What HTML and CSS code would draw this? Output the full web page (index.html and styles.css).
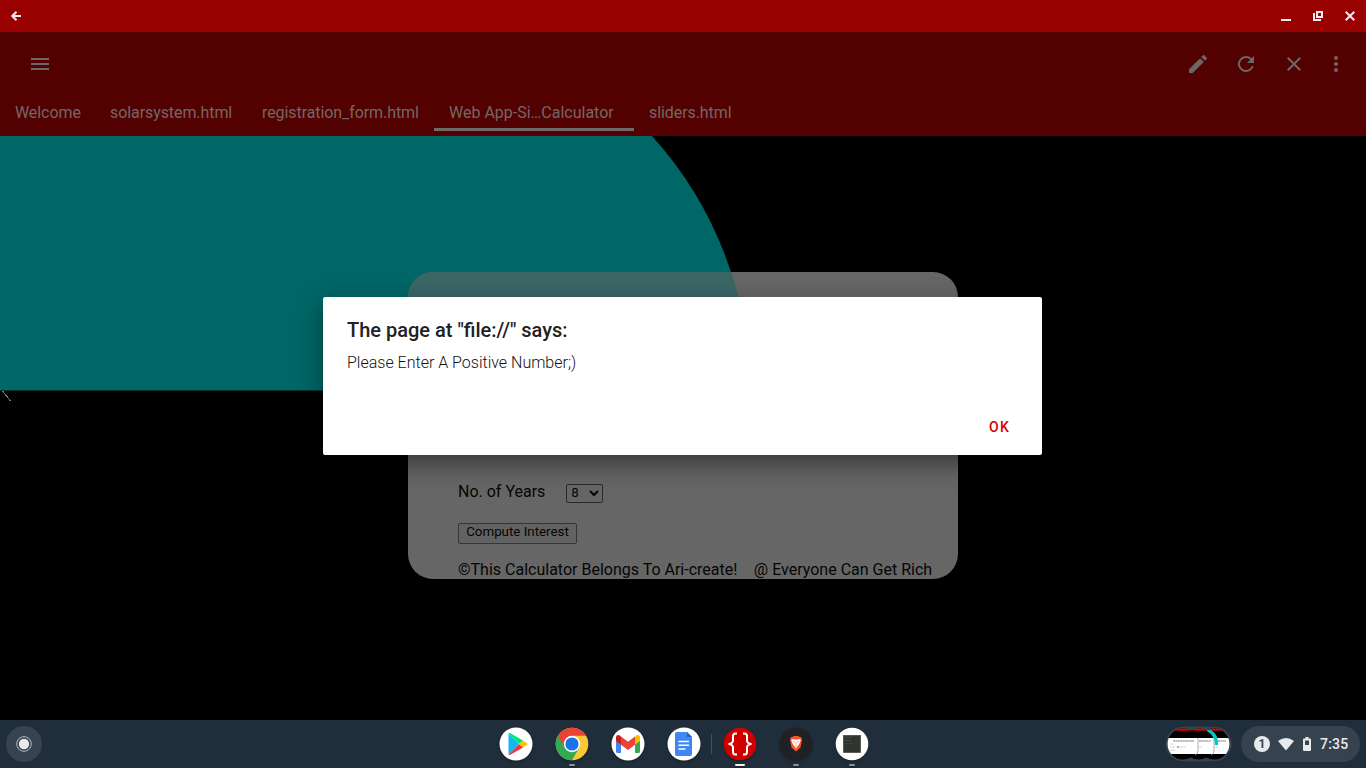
FILE: index.html
```html
<!DOCTYPE html>
<html lang="en">
<head>
<meta charset="utf-8">
<title>Web App-Simple Interest Calculator</title>
<link rel="stylesheet" href="styles.css">
</head>
<body>
<div class="screen">
  <header class="titlebar">
    <svg width="16" height="16" viewBox="0 0 16 16" fill="none" stroke="#f3eaf0" stroke-width="2"><path d="M13 8H4.500M8.500 3.700 4.300 8l4.200 4.300"/></svg>
    <div class="window-controls">
      <svg width="16" height="16" viewBox="0 0 16 16"><path d="M3 11h10v2H3z" fill="#f1eaee"/></svg>
      <svg width="16" height="16" viewBox="0 0 16 16"><path d="M6 3h7v7H6zM8 5v3h3V5zM3 5h2v6h6v2H3z" fill="#f1eaee" fill-rule="evenodd"/></svg>
      <svg width="16" height="16" viewBox="0 0 16 16" fill="none" stroke="#f1eaee" stroke-width="2"><path d="m3.700 3.700 8.600 8.600M12.300 3.700l-8.600 8.600"/></svg>
    </div>
  </header>
  <div class="app-header">
    <div class="toolbar">
      <svg class="icon" viewBox="0 0 24 24"><path d="M3 18h18v-2H3v2zm0-5h18v-2H3v2zm0-7v2h18V6H3z"/></svg>
      <div class="actions">
        <svg class="icon" viewBox="0 0 24 24"><path d="M3 17.250V21h3.750L17.810 9.940l-3.750-3.750L3 17.250zM20.710 7.040a1 1 0 0 0 0-1.410l-2.340-2.340a1 1 0 0 0-1.410 0l-1.830 1.830 3.750 3.750 1.830-1.830z"/></svg>
        <svg class="icon" viewBox="0 0 24 24"><path d="M17.650 6.350A8 8 0 1 0 19.730 14h-2.080A6 6 0 1 1 12 6c1.660 0 3.140.69 4.220 1.780L13 11h7V4l-2.350 2.350z"/></svg>
        <svg class="icon" viewBox="0 0 24 24"><path d="M19 6.410 17.590 5 12 10.590 6.410 5 5 6.410 10.590 12 5 17.590 6.410 19 12 13.410 17.590 19 19 17.590 13.410 12z"/></svg>
        <svg class="icon more" viewBox="0 0 24 24"><circle cx="12" cy="6" r="2"/><circle cx="12" cy="12" r="2"/><circle cx="12" cy="18" r="2"/></svg>
      </div>
    </div>
    <nav class="tabs">
      <span class="tab">Welcome</span><span class="tab">solarsystem.html</span><span class="tab">registration_form.html</span><span class="tab active">Web App-Si…Calculator</span><span class="tab">sliders.html</span>
    </nav>
  </div>
  <main class="page">
    <svg class="backdrop" width="760" height="584" viewBox="0 0 760 584">
      <path d="M0 0H652A379 379 0 0 1 750 254.500H0z" fill="#006666"/>
      <path d="M2.500 255 10.500 265" stroke="#777" stroke-width="1" shape-rendering="crispEdges"/>
    </svg>
    <section class="card">
      <svg class="card-tint" width="352" height="119" viewBox="408 136 352 119"><path d="M0 0H652A379 379 0 0 1 750 254.500H0z" fill="#3b6666"/></svg>
      <div class="years"><span>No. of Years</span><span class="select">8<svg width="10" height="8" viewBox="0 0 10 8"><path d="m1 2 4 4 4-4" fill="none" stroke="#050505" stroke-width="2"/></svg></span></div>
      <button class="compute">Compute Interest</button>
      <p class="credit"><span>©This Calculator Belongs To Ari-create!</span><span>@ Everyone Can Get Rich</span></p>
    </section>
    <section class="dialog">
      <h1>The page at "file://" says:</h1>
      <p>Please Enter A Positive Number;)</p>
      <button class="ok">OK</button>
    </section>
  </main>
  <footer class="shelf">
    <div class="launcher"><svg width="16" height="16" viewBox="0 0 16 16"><circle cx="8" cy="8" r="7.300" fill="none" stroke="#b7bdc3" stroke-width="1"/><circle cx="8" cy="8" r="5.200" fill="#e8eaed"/></svg></div>
    <div class="apps">
      <div class="app"><svg viewBox="0 0 34 34"><circle cx="17" cy="17" r="16.500" fill="#fff"/><path d="M9.500 6.200v21.600L20 17z" fill="#11b9f4"/><path d="M9.500 6.200 20 17l4-3.400L11 6z" fill="#00e676"/><path d="M9.500 27.800 20 17l4 3.400L11 28z" fill="#f43249"/><path d="m20 17 4-3.400 5 3.400-5 3.400z" fill="#ffc107"/></svg></div>
      <div class="app"><svg viewBox="0 0 34 34"><circle cx="17" cy="17" r="16.300" fill="#fcc934"/><path d="M17 17 2.900 8.800A16.300 16.300 0 0 0 17 33.300l7.100-12.200z" fill="#34a853"/><path d="M2.900 8.800A16.300 16.300 0 0 1 31.100 8.800H17L10 21z" fill="#ea4335"/><circle cx="17" cy="17" r="8.200" fill="#fff"/><circle cx="17" cy="17" r="6.600" fill="#1a73e8"/></svg><i class="run"></i></div>
      <div class="app"><svg viewBox="0 0 34 34"><circle cx="17" cy="17" r="16.500" fill="#fff"/><path d="M5 11v13.500q0 1.500 1.500 1.500H10V14z" fill="#4285f4"/><path d="M29 11v13.500q0 1.500-1.500 1.500H24V14z" fill="#34a853"/><path d="M5 11.500V10q.5-3 4-1.500l1 1v8.300L5 14z" fill="#c5221f"/><path d="M29 11.500V10q-.5-3-4-1.500l-1 1v8.300L29 14z" fill="#fbbc04"/><path d="m10 9.500 7 5.300 7-5.300v8.300L17 23l-7-5.200z" fill="#ea4335"/></svg></div>
      <div class="app"><svg viewBox="0 0 34 34"><circle cx="17" cy="17" r="16.500" fill="#fff"/><path d="M10 5h10l5 5v17q0 2-2 2H10q-2 0-2-2V7q0-2 2-2z" fill="#4285f4"/><path d="M20 5v5h5z" fill="#1967d2"/><path d="M11.500 14.500h10.500M11.500 18.300h10.500M11.500 22h7" stroke="#fff" stroke-width="1.500"/></svg></div>
      <div class="divider"></div>
      <div class="app"><svg viewBox="0 0 34 34"><circle cx="17" cy="17" r="16.300" fill="#d00000"/><path d="M14 6.500h-1.500Q10 6.500 10 9v4.500q0 3-4.500 3.500 4.500.5 4.500 3.500V25q0 2.500 2.500 2.500H14M20 6.500h1.500Q24 6.500 24 9v4.500q0 3 4.500 3.500-4.500.5-4.500 3.500V25q0 2.500-2.500 2.500H20" fill="none" stroke="#fff" stroke-width="2"/></svg><i class="run current"></i></div>
      <div class="app"><svg viewBox="0 0 34 34"><circle cx="17" cy="17" r="16.300" fill="#202124"/><path d="m13.500 10 1-1h5l1 1h1.500l1 2.500-1.500 8L17 24.500l-4.500-4-1.500-8 1-2.500z" fill="#fb542b"/><path d="m13 12 2.500.6h3L21 12l.7 1.500-1.500 3.500-1.500 2L17 21.500 15.300 19l-1.500-2-1.500-3.500z" fill="#fff"/><path d="m14 14.500 1.800.7M20 14.500l-1.800.7M17 15.500v2.500m-1 1 1 .4 1-.4" fill="none" stroke="#fb542b" stroke-width=".6"/></svg><i class="run"></i></div>
      <div class="app"><svg viewBox="0 0 34 34"><circle cx="17" cy="17" r="16.300" fill="#fff"/><path d="M8.200 8.200h17.600v17.600H8.200z" fill="#30342f"/><path d="M8.200 8.200h17.600v1H8.200z" fill="#555"/><path d="M10 11h4m1 0h2m-7 2.500h6m-6 3h3m1 0h3M10 20h2" stroke="#4c504a" stroke-width=".7"/></svg><i class="run"></i></div>
    </div>
    <div class="tray">
      <div class="previews">
        <svg width="68" height="36" viewBox="0 0 68 36"><defs><clipPath id="stack"><circle cx="18" cy="18" r="15.500"/><circle cx="33.500" cy="18" r="15.500"/><circle cx="49" cy="18" r="15.500"/></clipPath></defs><rect x=".7" y=".7" width="66" height="34.600" rx="17.300" fill="#354351"/><g clip-path="url(#stack)"><path d="M0 0h68v36H0z"/><path d="M0 2h68v2.500H0z" fill="#e00000"/><path d="M10 4.500h14M30 4.500h12M47 4.500h11" stroke="#a70000" stroke-width="1"/><path d="M2 12h64v16H2z" fill="#fff"/><path d="M33 12v13q0 3-3 4M49 12v13q0 3-3 4" fill="none" stroke="#999" stroke-width=".8"/><path d="M42 4h4q8 5 7 15h-3q0-9-8-14z" fill="#00c5cf"/><path d="M8 15h21M34 15h12M53 15h8" stroke="#777" stroke-width="1" stroke-dasharray="2 .4"/><path d="M5 18h3m-3 3h5m-5 3h5m24-3h3m13 0h3M13 21h8" stroke="#bbb" stroke-width=".6"/><path d="M12 20.500h2v1h-2z" fill="#3276d4"/></g></svg>
      </div>
      <div class="status">
        <span class="badge">1</span>
        <svg class="wifi" width="16" height="13" viewBox="0 0 16 13"><path d="M0 3q8-6 16 0L8 12.500z" fill="#e8eaed"/></svg>
        <svg class="battery" width="8" height="14" viewBox="0 0 8 14"><path d="M2.500 0h3v1.500H7q1 0 1 1V13q0 1-1 1H1q-1 0-1-1V2.500q0-1 1-1h1.500z" fill="#e8eaed"/><path d="M2 3.500h4V8H2z" fill="#394452"/></svg>
        <span class="time">7:35</span>
      </div>
    </div>
  </footer>
</div>
</body>
</html>
```
FILE: styles.css
```css
* { box-sizing: border-box; }
body { margin: 0; font-family: Roboto, sans-serif; background: #000; }
svg { display: block; flex-shrink: 0; }
button { font-family: inherit; }
.screen { width: 1366px; height: 768px; display: flex; flex-direction: column; overflow: hidden; }
.titlebar { height: 32px; flex: none; background: #990000; display: flex; align-items: center; justify-content: space-between; padding: 0 8px; }
.window-controls { display: flex; gap: 16px; }
.app-header { height: 104px; flex: none; background: #530000; color: #756767; }
.toolbar { height: 64px; display: flex; align-items: center; justify-content: space-between; padding: 0 18px 0 28px; }
.icon { width: 24px; height: 24px; fill: #6e6666; }
.actions { display: flex; gap: 24px; }
.more { margin-left: -6px; }
.tabs { display: flex; height: 35px; font-size: 16px; line-height: 34px; letter-spacing: -.08px; white-space: nowrap; }
.tab { flex: none; padding: 0 15px; height: 35px; }
.tab:nth-child(1) { width: 95px; }
.tab:nth-child(2) { width: 152px; }
.tab:nth-child(3) { width: 187px; }
.tab.active { width: 200px; border-bottom: 3px solid #706969; letter-spacing: 0; }
.page { position: relative; height: 584px; flex: none; background: #000; overflow: hidden; }
.backdrop { position: absolute; left: 0; top: 0; }
.card { position: absolute; left: 408px; top: 136px; width: 550px; height: 307px; padding: 209px 0 0 50px; border-radius: 25px; background: #666; overflow: hidden; color: #050505; font-size: 16px; }
.card-tint { position: absolute; left: 0; top: 0; }
.years { display: flex; align-items: center; gap: 21px; height: 22px; line-height: 22px; }
.select { width: 37px; height: 19px; border: 1px solid #292929; border-radius: 2px; display: flex; align-items: center; justify-content: space-between; padding: 0 3px 0 4px; font-size: 13.333px; margin-top: 2px; }
.compute { display: block; width: 119px; height: 21px; margin-top: 20px; padding: 0 0 3px; border: 1px solid #353535; border-radius: 2px; background: #626262; color: #050505; font-size: 13.333px; line-height: 16px; }
.credit { margin: 16px 0 0; display: flex; gap: 16.5px; line-height: 19px; white-space: nowrap; }
.dialog { position: absolute; z-index: 2; left: 323px; top: 161px; width: 719px; height: 158px; padding: 21px 24px 0; border-radius: 2px; background: #fff; box-shadow: 0 11px 15px -7px rgba(0,0,0,.2), 0 9px 24px 3px rgba(0,0,0,.3); color: #212121; }
.dialog h1 { margin: 0; font-size: 20px; line-height: 24px; font-weight: 500; }
.dialog p { margin: 11px 0 0; font-size: 16px; line-height: 20px; font-weight: 350; color: #111; }
.ok { display: block; margin: 44px 8px 0 auto; padding: 0; border: 0; background: none; color: #d50000; font-size: 14px; line-height: 20px; font-weight: 500; letter-spacing: 1.25px; }
.shelf { height: 48px; flex: none; background: #202d3b; display: grid; grid-template-columns: 1fr auto 1fr; align-items: center; padding: 0 6px; }
.launcher { width: 36px; height: 36px; border-radius: 50%; background: #374350; display: flex; align-items: center; justify-content: center; }
.apps { display: flex; align-items: center; gap: 22px; margin-left: 2px; height: 48px; }
.app { position: relative; width: 34px; height: 34px; filter: drop-shadow(0 1px 1px rgba(0,0,0,.3)); }
.app svg { width: 34px; height: 34px; }
.run { position: absolute; left: 14px; top: 37px; width: 6px; height: 2px; border-radius: 1px; background: #8b929a; }
.current { left: 12px; width: 10px; background: #f0f1f3; }
.divider { position: relative; left: -1px; width: 1px; height: 20px; margin: 0 -11.5px; background: #465160; }
.tray { justify-self: end; display: flex; align-items: center; gap: 8px; }
.status { width: 119px; height: 36px; border-radius: 18px; background: #37424f; color: #e8eaed; display: flex; align-items: center; padding-left: 13px; }
.badge { width: 16px; height: 16px; border-radius: 50%; background: #e8eaed; color: #37424f; font-size: 12px; font-weight: 700; line-height: 16px; text-align: center; }
.wifi { margin-left: 8px; }
.battery { margin-left: 9px; }
.time { margin-left: 9px; font-size: 14px; font-weight: 500; letter-spacing: .2px; }
```
